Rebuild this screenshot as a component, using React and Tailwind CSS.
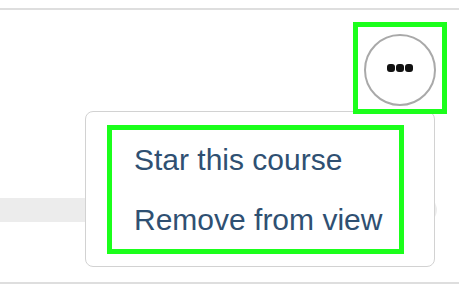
const menuItems = ["Star this course", "Remove from view"];

export default function App() {
  return (
    <div className="relative h-[294px] w-[459px] overflow-hidden bg-white font-['Liberation_Sans',Arial,sans-serif]">
      <div className="mt-2 h-[2px] bg-[#dedede]" />

      <div className="flex justify-end pr-[23px] pt-[24px]">
        <button
          type="button"
          className="flex h-[72px] w-[72px] items-center justify-center rounded-full border-2 border-[#a9a9a9] bg-white pb-[5px]"
        >
          <span className="flex gap-[1px]">
            <span className="h-[8px] w-[8px] rounded-[3px] bg-[#111]" />
            <span className="h-[8px] w-[8px] rounded-[3px] bg-[#111]" />
            <span className="h-[8px] w-[8px] rounded-[3px] bg-[#111]" />
          </span>
        </button>
      </div>

      <div className="mt-[92px] h-[24px] w-[437px] rounded-r-full bg-[#ececec]" />

      <div className="mt-[60px] h-[2px] bg-[#dedede]" />

      {/* dropdown menu */}
      <div className="absolute left-[85px] top-[111px] h-[156px] w-[350px] rounded-[8px] border border-[#d2d2d2] bg-white pl-[48px] pt-[18px]">
        {menuItems.map((item) => (
          <div key={item} className="text-[30px] leading-[60px] text-[#2f5072]">
            {item}
          </div>
        ))}
      </div>

      {/* highlight boxes */}
      <div className="pointer-events-none absolute left-[353px] top-[22px] h-[92px] w-[94px] border-[5px] border-[#1bff1b]" />
      <div className="pointer-events-none absolute left-[107px] top-[125px] h-[129px] w-[297px] border-[5px] border-[#1bff1b]" />
    </div>
  );
}
